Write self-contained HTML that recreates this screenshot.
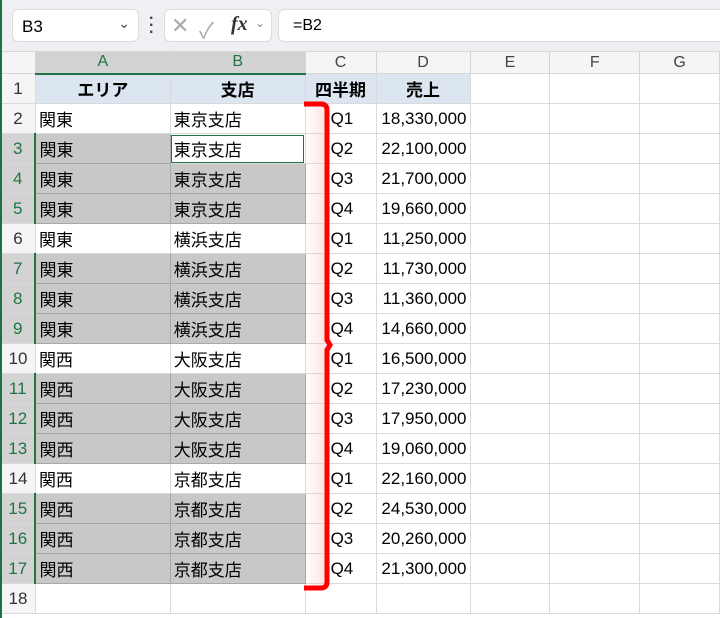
<!DOCTYPE html>
<html><head><meta charset="utf-8"><style>
body{margin:0;width:720px;height:618px;overflow:hidden;background:#fff;font-family:"Liberation Sans","Noto Sans CJK JP",sans-serif;position:relative}
.top{position:absolute;left:0;top:0;width:720px;height:51px;background:#eef0f3;border-left:2px solid #1e7145;box-sizing:border-box}
.box{position:absolute;top:9px;height:33px;background:#fff;border:1px solid #dcdcdc;border-radius:6px;box-sizing:border-box}
table{position:absolute;left:0;top:51px;border-collapse:collapse;table-layout:fixed}
tr{height:30px}
td{border:1px solid #dadada;height:30px;padding:0 3px;font-size:17px;white-space:nowrap;overflow:hidden;box-sizing:border-box}
tr.ch{height:22px}
tr.ch td{height:22px;background:#f5f5f5;text-align:center;font-size:16px;color:#444;border-color:#d6d6d6}
tr.ch td.s{background:#d3d3d3;color:#217346;border-bottom:2px solid #217346}
td.rh{background:#f5f5f5;text-align:center;color:#333;font-size:17px;padding:0}
td.rh.s{background:#d3d3d3;color:#217346;border-right:2px solid #217346}
tr.h td.d{background:#dce6f1;font-weight:bold;text-align:center}
td.g{background:#c8c8c8;border-color:#a8a8a8}
td.n{text-align:right}
td.q{padding-left:25px;position:relative;z-index:2}
td.a{outline:1px solid #217346;outline-offset:-2px}
</style></head><body>
<div class="top">
<div class="box" style="left:10px;width:127px"><span style="position:absolute;left:9px;top:7px;font-size:17px">B3</span><span style="position:absolute;right:8px;top:5px;font-size:14px;color:#444">&#8964;</span></div>
<div style="position:absolute;left:147px;top:15px;width:3px;height:20px;color:#444;font-size:16px;font-weight:bold;line-height:7px">·<br>·<br>·</div>
<div class="box" style="left:162px;width:108px"><span style="position:absolute;left:6px;top:3px;font-size:22px;color:#aaa">&#x2715;</span><span style="position:absolute;left:34px;top:3px;font-size:22px;color:#aaa">&#x2713;</span><span style="position:absolute;left:66px;top:3px;font-size:20px;font-style:italic;font-family:'Liberation Serif',serif;font-weight:bold;color:#333">fx</span><span style="position:absolute;left:90px;top:6px;font-size:12px;color:#888">&#8964;</span></div>
<div class="box" style="left:276px;width:450px"><span style="position:absolute;left:14px;top:7px;font-size:16px">=B2</span></div>
</div>
<div style="position:absolute;left:306px;top:106px;width:20px;height:480px;background:linear-gradient(to right,rgba(255,200,200,0),rgba(255,190,190,0.45));z-index:1"></div>
<table>
<colgroup><col style="width:35px"><col style="width:135px"><col style="width:135px"><col style="width:71px"><col style="width:94px"><col style="width:80px"><col style="width:90px"><col style="width:80px"></colgroup>
<tr class="ch"><td style="background:#f5f5f5"></td><td class="s">A</td><td class="s">B</td><td>C</td><td>D</td><td>E</td><td>F</td><td>G</td></tr>
<tr class="h"><td class="rh">1</td><td class="d">エリア</td><td class="d">支店</td><td class="d">四半期</td><td class="d">売上</td><td></td><td></td><td></td></tr>
<tr><td class="rh">2</td><td>関東</td><td>東京支店</td><td class="q">Q1</td><td class="n">18,330,000</td><td></td><td></td><td></td></tr>
<tr><td class="rh s">3</td><td class="g">関東</td><td class="a">東京支店</td><td class="q">Q2</td><td class="n">22,100,000</td><td></td><td></td><td></td></tr>
<tr><td class="rh s">4</td><td class="g">関東</td><td class="g">東京支店</td><td class="q">Q3</td><td class="n">21,700,000</td><td></td><td></td><td></td></tr>
<tr><td class="rh s">5</td><td class="g">関東</td><td class="g">東京支店</td><td class="q">Q4</td><td class="n">19,660,000</td><td></td><td></td><td></td></tr>
<tr><td class="rh">6</td><td>関東</td><td>横浜支店</td><td class="q">Q1</td><td class="n">11,250,000</td><td></td><td></td><td></td></tr>
<tr><td class="rh s">7</td><td class="g">関東</td><td class="g">横浜支店</td><td class="q">Q2</td><td class="n">11,730,000</td><td></td><td></td><td></td></tr>
<tr><td class="rh s">8</td><td class="g">関東</td><td class="g">横浜支店</td><td class="q">Q3</td><td class="n">11,360,000</td><td></td><td></td><td></td></tr>
<tr><td class="rh s">9</td><td class="g">関東</td><td class="g">横浜支店</td><td class="q">Q4</td><td class="n">14,660,000</td><td></td><td></td><td></td></tr>
<tr><td class="rh">10</td><td>関西</td><td>大阪支店</td><td class="q">Q1</td><td class="n">16,500,000</td><td></td><td></td><td></td></tr>
<tr><td class="rh s">11</td><td class="g">関西</td><td class="g">大阪支店</td><td class="q">Q2</td><td class="n">17,230,000</td><td></td><td></td><td></td></tr>
<tr><td class="rh s">12</td><td class="g">関西</td><td class="g">大阪支店</td><td class="q">Q3</td><td class="n">17,950,000</td><td></td><td></td><td></td></tr>
<tr><td class="rh s">13</td><td class="g">関西</td><td class="g">大阪支店</td><td class="q">Q4</td><td class="n">19,060,000</td><td></td><td></td><td></td></tr>
<tr><td class="rh">14</td><td>関西</td><td>京都支店</td><td class="q">Q1</td><td class="n">22,160,000</td><td></td><td></td><td></td></tr>
<tr><td class="rh s">15</td><td class="g">関西</td><td class="g">京都支店</td><td class="q">Q2</td><td class="n">24,530,000</td><td></td><td></td><td></td></tr>
<tr><td class="rh s">16</td><td class="g">関西</td><td class="g">京都支店</td><td class="q">Q3</td><td class="n">20,260,000</td><td></td><td></td><td></td></tr>
<tr><td class="rh s">17</td><td class="g">関西</td><td class="g">京都支店</td><td class="q">Q4</td><td class="n">21,300,000</td><td></td><td></td><td></td></tr>
<tr><td class="rh">18</td><td></td><td></td><td></td><td></td><td></td><td></td><td></td></tr>
</table>
<div style="position:absolute;left:0;top:51px;width:2px;height:567px;background:#1e7145"></div>
<svg style="position:absolute;left:0;top:0;z-index:3" width="720" height="618"><path d="M304 104 H321 Q327 104 327 110 V340 L330 345 L327 350 V582 Q327 588 321 588 H304" fill="none" stroke="#ff0000" stroke-width="5"/></svg>
</body></html>
